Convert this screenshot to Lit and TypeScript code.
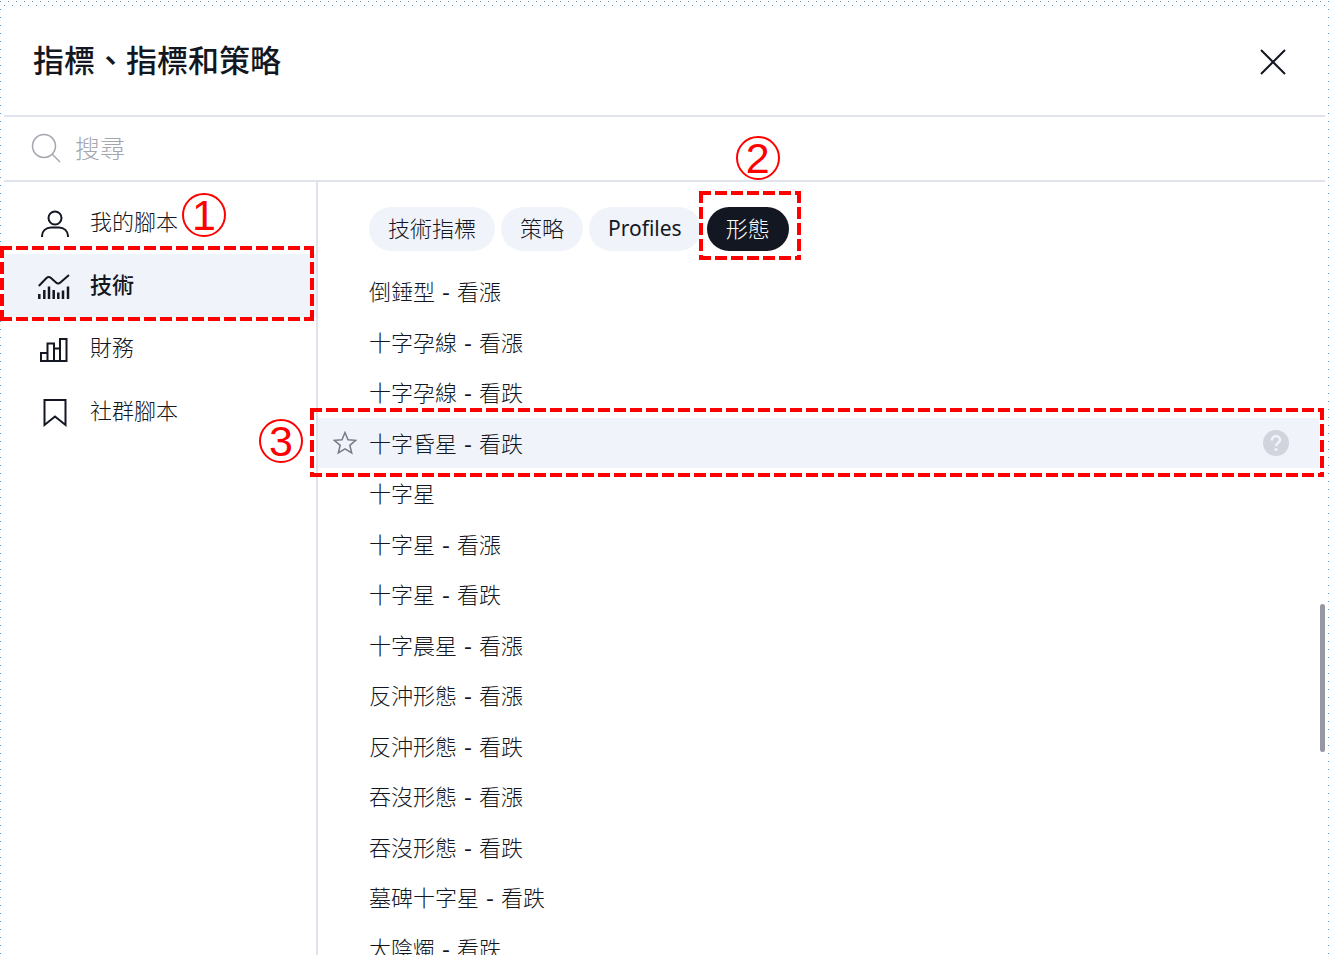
import { LitElement, html, css, svg } from "lit";
import { customElement, state } from "lit/decorators.js";

const icons = {
  user: svg`<circle cx="17" cy="12" r="6.500"/><path d="M4 31v-1c0-5 4-8.500 9-8.500h8c5 0 9 3.500 9 8.500v1"/>`,
  tech: svg`<path d="M.8 17 8.500 9q2.200-2 4.500 0l5 4.500q2.200 2 4.400 0L31 6"/><path stroke-width="2.500" d="M1.300 30v-5M6.300 30v-9M11 30V17.500M15.700 30v-9M20.300 30v-6.500M25 30v-8.500M30 30V17.500"/>`,
  finance: svg`<path d="M3 29v-8h6.500v8M9.500 29V11.500H16V29M16 16.500h6M22 29V7h6.500v22M2 29h27.500"/>`,
  mark: svg`<path d="M6.500 5h21v25L17 21.500 6.500 30z"/>`,
};

const categories = [
  { label: "我的腳本", icon: icons.user },
  { label: "技術", icon: icons.tech, step: true },
  { label: "財務", icon: icons.finance },
  { label: "社群腳本", icon: icons.mark },
];

const tabs = ["技術指標", "策略", "Profiles", "形態"];

const patterns = [
  ["倒錘型", "看漲"],
  ["十字孕線", "看漲"],
  ["十字孕線", "看跌"],
  ["十字昏星", "看跌"],
  ["十字星"],
  ["十字星", "看漲"],
  ["十字星", "看跌"],
  ["十字晨星", "看漲"],
  ["反沖形態", "看漲"],
  ["反沖形態", "看跌"],
  ["吞沒形態", "看漲"],
  ["吞沒形態", "看跌"],
  ["墓碑十字星", "看跌"],
  ["大陰燭", "看跌"],
];

@customElement("step-number")
export class StepNumber extends LitElement {
  static properties = { value: {} };
  declare value: string;

  static styles = css`
    :host {
      display: grid;
      place-items: center;
      box-sizing: border-box;
      width: 44px;
      height: 44px;
      border: 2px solid #f00;
      border-radius: 50%;
      color: #f00;
      font: 400 43px/40px "Liberation Sans", sans-serif;
    }
  `;

  render() {
    return html`<span>${this.value}</span>`;
  }
}

@customElement("dash-frame")
export class DashFrame extends LitElement {
  static styles = css`
    :host { display: block; pointer-events: none; }
    .frame { display: block; width: 100%; height: 100%; }
    .line { fill: none; stroke: #f00; stroke-width: 4; stroke-dasharray: 12 4; }
  `;

  render() {
    return html`<svg class="frame" aria-hidden="true">
      <line class="line" x1="0" y1="2" x2="100%" y2="2" />
      <line class="line" x1="0" y1="100%" x2="100%" y2="100%" transform="translate(0 -2)" />
      <line class="line" x1="2" y1="0" x2="2" y2="100%" />
      <line class="line" x1="100%" y1="0" x2="100%" y2="100%" transform="translate(-2 0)" />
    </svg>`;
  }
}

@customElement("app-root")
export class AppRoot extends LitElement {
  @state() category = 1;
  @state() tab = 3;

  static styles = css`
    :host {
      display: block;
      box-sizing: border-box;
      height: 100vh;
      overflow: hidden;
      padding: 8px 7px 0 4px;
      color: #131722;
      font-family: "Noto Sans", "Noto Sans CJK TC", sans-serif;
      background:
        conic-gradient(from 90deg at 7px 7px, #5b92c8 90deg, transparent 0) 1px 2px / 8px 8px,
        conic-gradient(from 90deg at 7px 7px, #5b92c8 90deg, transparent 0) 5px 6px / 8px 8px,
        #fff;
    }
    button { border: 0; background: none; color: inherit; font: inherit; padding: 0; cursor: pointer; }
    .dialog { display: flex; flex-direction: column; height: 100%; background: #fff; }
    .header {
      display: flex;
      align-items: center;
      justify-content: space-between;
      height: 107px;
      padding: 0 36px 0 29px;
      border-bottom: 2px solid #e0e3eb;
    }
    .title { margin: 0; padding-bottom: 3px; font-size: 31px; line-height: 40px; font-weight: 500; }
    .close { display: flex; }
    .close-icon { width: 32px; height: 32px; fill: none; stroke: #131722; stroke-width: 2; }
    .search {
      display: flex;
      align-items: center;
      gap: 14px;
      box-sizing: border-box;
      height: 65px;
      padding: 0 28px 2px 27px;
      border-bottom: 2px solid #e0e3eb;
    }
    .search-icon { width: 30px; height: 30px; fill: none; stroke: #a3a6af; stroke-width: 1.5; }
    .search-input {
      flex: 1;
      border: 0;
      outline: 0;
      padding: 0 0 2px;
      background: none;
      font: 300 25px/36px "Noto Sans CJK TC", sans-serif;
      color: #131722;
    }
    .search-input::placeholder { color: #a3a6af; opacity: 1; }
    .body { display: flex; flex: 1; min-height: 0; }
    .sidebar { flex: none; width: 312px; border-right: 2px solid #e0e3eb; padding-top: 9px; }
    .category {
      position: relative;
      display: flex;
      align-items: center;
      gap: 18px;
      width: 100%;
      height: 63px;
      padding: 0 0 0 34px;
      font-size: 22px;
      line-height: 32px;
      font-weight: 300;
      text-align: left;
    }
    .category.active { font-weight: 500; background: #f0f3fa; }
    .category-label { padding-bottom: 4px; }
    .category-icon { width: 34px; height: 34px; fill: none; stroke: #131722; stroke-width: 2; }
    .category-frame { position: absolute; inset: -8px 2px -4px -4px; }
    .main { position: relative; flex: 1; min-width: 0; }
    .tabs { display: flex; gap: 6px; padding: 25px 0 15px 51px; }
    .tab-slot { position: relative; isolation: isolate; }
    .tab {
      display: block;
      height: 44px;
      padding: 0 19px 2px;
      border-radius: 22px;
      background: #f0f3fa;
      font-size: 22px;
      line-height: 42px;
      font-weight: 300;
    }
    .tab.latin { font-size: 21px; font-weight: 400; }
    .tab.active { background: #131722; color: #fff; }
    .tab-frame { position: absolute; z-index: -1; inset: -16px -12px -9px -8px; background: #fff; }
    .list { display: grid; grid-auto-rows: 51px 50px; margin: 0; padding: 0; list-style: none; }
    .row {
      position: relative;
      display: grid;
      grid-template-columns: 24px 1fr 26px;
      align-items: center;
      column-gap: 12px;
      margin-right: 6px;
      padding: 0 30px 0 15px;
      font: 300 22px/32px "DejaVu Sans", "Noto Sans CJK TC", sans-serif;
    }
    .row.hovered { background: #f0f3fa; }
    .row-label { grid-column: 2; padding-top: 3px; white-space: pre; }
    .dash { font-weight: 400; }
    .star { width: 24px; height: 24px; fill: none; stroke: #787b86; stroke-width: 1.5; }
    .help { display: flex; }
    .help-icon { width: 26px; height: 26px; }
    .row-frame { position: absolute; inset: -10px -5px -9px -8px; }
    .scroll-thumb {
      position: absolute;
      top: 422px;
      right: 0;
      width: 5px;
      height: 148px;
      border-radius: 3px;
      background: #9598a1;
    }
    .badge { position: absolute; z-index: 2; }
    .badge-category { left: 178px; top: -61px; }
    .badge-tab { left: 29px; top: -71px; }
    .badge-row { left: -59px; top: 1px; }
  `;

  render() {
    return html`
      <section class="dialog" role="dialog" aria-labelledby="title">
        <header class="header">
          <h1 class="title" id="title">指標、指標和策略</h1>
          <button class="close" aria-label="關閉">
            <svg class="close-icon" viewBox="0 0 32 32"><path d="M4 4 28 28M28 4 4 28" /></svg>
          </button>
        </header>
        <label class="search">
          <svg class="search-icon" viewBox="0 0 30 30" aria-hidden="true">
            <circle cx="13" cy="13" r="11.500" /><path d="m21 21 8 8" />
          </svg>
          <input class="search-input" type="text" placeholder="搜尋" aria-label="搜尋" />
        </label>
        <div class="body">
          <nav class="sidebar">
            ${categories.map((c, i) => html`
              <button class="category ${i === this.category ? "active" : ""}" @click=${() => (this.category = i)}>
                <svg class="category-icon" viewBox="0 0 34 34" aria-hidden="true">${c.icon}</svg>
                <span class="category-label">${c.label}</span>
                ${c.step ? html`
                  <dash-frame class="category-frame"></dash-frame>
                  <step-number class="badge badge-category" value="1"></step-number>` : ""}
              </button>`)}
          </nav>
          <main class="main">
            <div class="tabs">
              ${tabs.map((t, i) => html`
                <div class="tab-slot">
                  <button
                    class="tab ${i === this.tab ? "active" : ""} ${t === "Profiles" ? "latin" : ""}"
                    @click=${() => (this.tab = i)}
                  >${t}</button>
                  ${i === 3 ? html`
                    <dash-frame class="tab-frame"></dash-frame>
                    <step-number class="badge badge-tab" value="2"></step-number>` : ""}
                </div>`)}
            </div>
            <ul class="list">
              ${patterns.map(([name, trend], i) => html`
                <li class="row ${i === 3 ? "hovered" : ""}">
                  ${i === 3 ? html`
                    <svg class="star" viewBox="0 0 24 24" aria-hidden="true">
                      <path d="m12 1.500 3 7.200 7.800.6-6 5 1.900 7.700L12 17.900 5.300 22l1.900-7.700-6-5 7.800-.6z" />
                    </svg>` : ""}
                  <span class="row-label">${name}${trend ? html`<span class="dash"> - </span>${trend}` : ""}</span>
                  ${i === 3 ? html`
                    <button class="help" aria-label="說明">
                      <svg class="help-icon" viewBox="0 0 26 26">
                        <circle cx="13" cy="13" r="13" fill="#d1d4dc" />
                        <path d="M9 10.500V10a4 4 0 0 1 8 0c0 3-4 3-4 6" fill="none" stroke="#f0f3fa" stroke-width="2.500" />
                        <circle cx="13" cy="19.500" r="1.600" fill="#f0f3fa" />
                      </svg>
                    </button>
                    <dash-frame class="row-frame"></dash-frame>
                    <step-number class="badge badge-row" value="3"></step-number>` : ""}
                </li>`)}
            </ul>
            <div class="scroll-thumb"></div>
          </main>
        </div>
      </section>
    `;
  }
}
